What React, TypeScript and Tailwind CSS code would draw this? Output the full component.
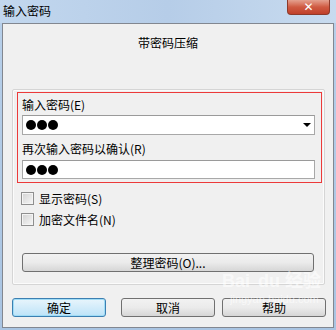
const font = { fontFamily: '"Noto Sans CJK SC", "Liberation Sans", sans-serif' }

function Dots() {
  return (
    <div className="flex items-center gap-[1px] pl-[3px]">
      <span className="w-[10px] h-[10px] rounded-full bg-black" />
      <span className="w-[10px] h-[10px] rounded-full bg-black" />
      <span className="w-[10px] h-[10px] rounded-full bg-black" />
    </div>
  )
}

function CheckRow({ label }: { label: string }) {
  return (
    <div className="flex items-center gap-[5px] h-[13px]">
      <span className="w-[13px] h-[13px] border border-[#8f8f8f] bg-gradient-to-br from-[#d2d2d2] to-[#f7f7f7] shadow-[inset_0_0_0_1px_#f4f4f4]" />
      <span className="text-[12px] leading-[13px] text-black">{label}</span>
    </div>
  )
}

function Button({ label, focused, className }: { label: string; focused?: boolean; className: string }) {
  return (
    <div
      className={
        "h-[19px] rounded-[3px] border flex items-center justify-center text-[12px] leading-none text-black " +
        (focused
          ? "border-[#3c7fb1] bg-gradient-to-b from-[#e8f5fc] to-[#bde3f8] shadow-[inset_0_0_0_1px_#9fdcf6] "
          : "border-[#707070] bg-gradient-to-b from-[#f2f2f2] via-[#ebebeb] to-[#d6d6d6] ") +
        className
      }
    >
      {label}
    </div>
  )
}

export default function App() {
  return (
    <div className="relative w-[336px] h-[330px] bg-gradient-to-b from-[#b8d0ea] to-[#a9c4e2] overflow-hidden" style={font}>
      {/* title bar */}
      <div className="h-[23px] relative bg-gradient-to-r from-[#c2d7ee] via-[#b6cde8] to-[#c8dbef] flex items-start">
        <span className="pl-[3px] pt-[4px] text-[12px] leading-[14px] text-black">输入密码</span>
        <div className="absolute right-[6px] top-0 w-[43px] h-[15px] rounded-b-[4px] border border-[#8d3a2b] border-t-0 bg-gradient-to-b from-[#e4a08f] via-[#cf5a42] to-[#c0402a] flex items-center justify-center">
          <span className="text-white text-[12px] font-bold leading-none" style={{ fontFamily: '"DejaVu Sans", sans-serif' }}>✕</span>
        </div>
      </div>

      {/* client area */}
      <div className="mx-[2px] h-[305px] border border-[#828790] bg-[#f0f0f0] flex flex-col">
        <div className="h-[65px] pt-[12px] text-center text-[12px] leading-[14px] text-black">带密码压缩</div>

        <div className="ml-[9px] w-[313px] h-[196px] rounded-[2px] border border-[#d5d5d5] bg-[#f0f0f0] shadow-[inset_0_0_0_1px_#fbfbfb] pt-[2px] pl-[4px]">
          <div className="w-[305px] h-[91px] border border-[#ec3a3a] pl-[4px] pt-[5px]">
            <div className="text-[12px] leading-[14px] text-black">输入密码(E)</div>
            <div className="mt-[3px] w-[293px] h-[20px] border border-[#a8a8a8] border-t-[#9a9a9a] bg-white flex items-center justify-between pr-[3px]">
              <Dots />
              <span className="w-0 h-0 border-l-[4px] border-r-[4px] border-t-[4px] border-l-transparent border-r-transparent border-t-black" />
            </div>
            <div className="mt-[7px] text-[12px] leading-[14px] text-black">再次输入密码以确认(R)</div>
            <div className="mt-[4px] w-[293px] h-[19px] border border-[#a8a8a8] border-t-[#9a9a9a] bg-white flex items-center">
              <Dots />
            </div>
          </div>

          <div className="pl-[4px] pt-[9px] flex flex-col gap-[8px]">
            <CheckRow label="显示密码(S)" />
            <CheckRow label="加密文件名(N)" />
          </div>

          <div className="pl-[5px] pt-[27px]">
            <Button label="整理密码(O)..." className="w-[292px]" />
          </div>
        </div>

        <div className="flex pl-[9px] pt-[13px]">
          <Button label="确定" focused className="w-[94px]" />
          <Button label="取消" className="w-[94px] ml-[15px]" />
          <Button label="帮助" className="w-[104px] ml-[7px]" />
        </div>
      </div>

      {/* watermark */}
      <div className="absolute left-[222px] top-[272px] pointer-events-none text-white/60 leading-none">
        <div className="text-[18px] font-bold" style={{ fontFamily: '"Liberation Sans", "Noto Sans CJK SC", sans-serif' }}>Bai<span className="ml-[8px]">du</span> 经验</div>
        <div className="text-[11px] mt-[4px] pl-[8px]" style={{ fontFamily: '"Liberation Sans", sans-serif' }}>jingyan.baidu.com</div>
      </div>
    </div>
  )
}
